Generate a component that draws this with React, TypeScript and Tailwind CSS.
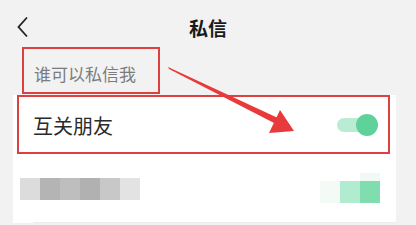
const font = { fontFamily: '"Noto Sans CJK SC", "Noto Sans", sans-serif' };

const blurLeft = ["#dcdcdc", "#b4b4b4", "#bebebe", "#b1b1b1", "#c8c8c8", "#e3e3e3"];

export default function App() {
  return (
    <div className="relative h-[225px] w-[416px] overflow-hidden bg-[#f2f2f2]" style={font}>
      {/* header */}
      <div className="relative flex h-[47px] justify-center pt-[17px]">
        <svg className="absolute left-[16px] top-[16px]" width="14" height="22" viewBox="0 0 14 22">
          <polyline points="11,1.5 2.5,11 11,20.5" fill="none" stroke="#222" strokeWidth="1.8" />
        </svg>
        <span className="text-[19px] font-bold leading-[22px] text-[#1a1a1a]">私信</span>
      </div>

      {/* section label */}
      <div className="ml-[22px] flex h-[47px] w-[138px] items-center border-2 border-[#dd4040] pl-[10px] pt-[6px] text-[17px] text-[#7c7c7c]">
        谁可以私信我
      </div>

      {/* card */}
      <div className="ml-[13px] mt-[1px] w-[383px] bg-white">
        <div className="ml-[4px] flex h-[59px] w-[373px] items-center justify-between border-2 border-[#dd4040] pl-[14px] pr-[10px]">
          <span className="pt-[3px] text-[20px] text-[#2a2a2a]">互关朋友</span>
          <div className="relative flex h-[22px] w-[41px] items-center">
            <div className="h-[14px] w-[30px] rounded-full bg-[#b9ecd2]" />
            <div className="absolute right-0 top-0 h-[22px] w-[22px] rounded-full bg-[#5fd29b]" />
          </div>
        </div>

        <div className="flex h-[68px] items-center justify-between pl-[7px] pr-[16px]">
          <div className="mt-[2px] flex">
            {blurLeft.map((c) => (
              <div key={c} className="h-[22px] w-[20px]" style={{ background: c }} />
            ))}
          </div>
          <div className="flex flex-col items-end">
            <div className="h-[8px] w-[20px] bg-[#f0faf5]" />
            <div className="flex">
              <div className="h-[22px] w-[20px] bg-[#f4fbf7]" />
              <div className="h-[22px] w-[20px] bg-[#b2ecd0]" />
              <div className="h-[22px] w-[20px] bg-[#80ddb0]" />
            </div>
          </div>
        </div>
        <div className="ml-[20px] h-px bg-[#ececec]" />
      </div>

      {/* annotation arrow */}
      <svg className="pointer-events-none absolute left-0 top-0" width="416" height="225" viewBox="0 0 416 225">
        <polygon points="168,67 169,69 276,124 278,118" fill="#e83a3a" />
        <polygon points="294,131 269,133 280,110" fill="#e83a3a" />
      </svg>
    </div>
  );
}
